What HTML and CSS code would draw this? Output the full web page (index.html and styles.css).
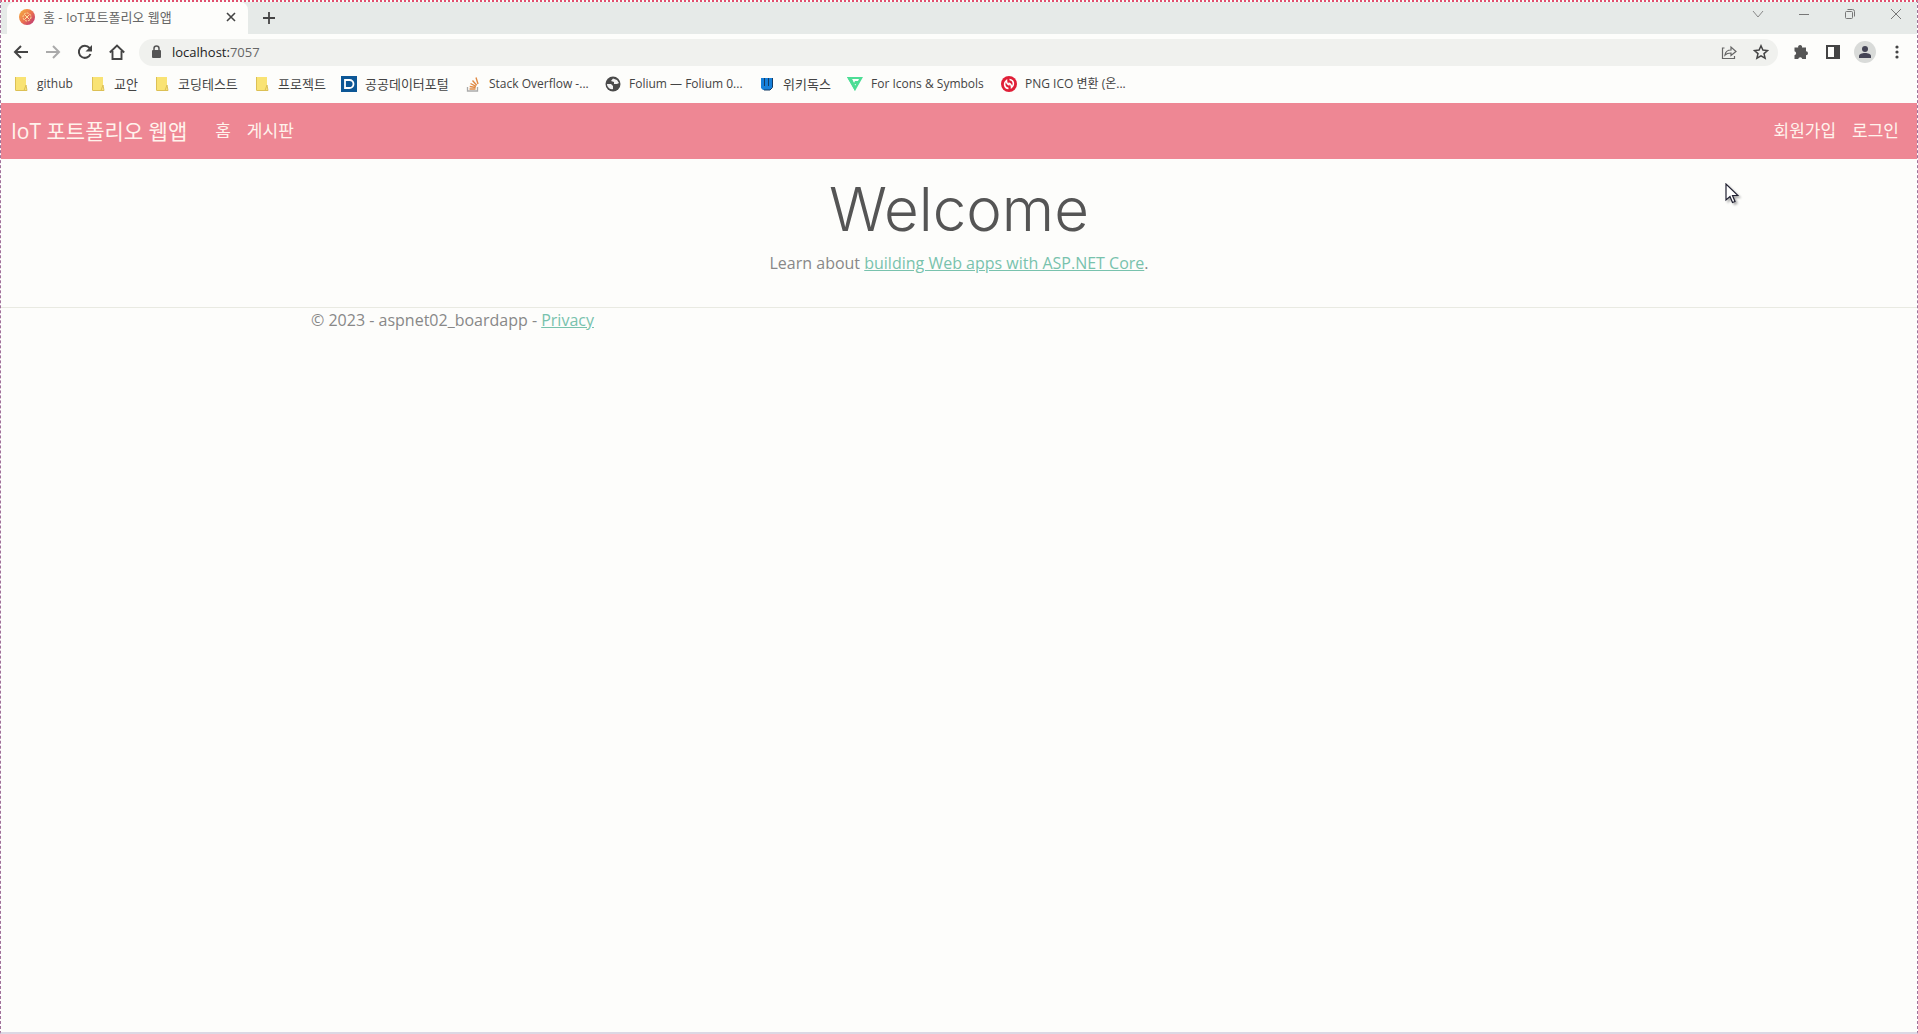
FILE: index.html
```html
<!DOCTYPE html>
<html lang="ko">
<head>
<meta charset="utf-8">
<title>홈 - IoT포트폴리오 웹앱</title>
<link rel="stylesheet" href="styles.css">
</head>
<body>
<div class="window">
  <div class="tabstrip">
    <div class="tab">
      <svg class="i16" viewBox="0 0 16 16"><defs><linearGradient id="fav" x1="0" y1="0" x2="1" y2="1"><stop offset="0" stop-color="#f5b63c"/><stop offset=".5" stop-color="#ec7350"/><stop offset="1" stop-color="#b52d79"/></linearGradient></defs><circle cx="8" cy="8" r="8" fill="url(#fav)"/><circle cx="8" cy="8" r="4" fill="none" stroke="#ffe3a0" stroke-dasharray="2 1"/><path d="M5.500 5.500l5 5M10.500 5.500l-5 5" stroke="#ffe3a0"/></svg>
      <span class="tab-title">홈 - IoT포트폴리오 웹앱</span>
      <button class="icon-btn" aria-label="탭 닫기"><svg class="i16" viewBox="0 0 16 16"><path d="M4 4l8 8M12 4l-8 8" stroke="#444" stroke-width="1.6"/></svg></button>
    </div>
    <button class="icon-btn new-tab" aria-label="새 탭"><svg class="i16" viewBox="0 0 16 16"><path d="M8 2v12M2 8h12" stroke="#444" stroke-width="1.8"/></svg></button>
    <div class="win-controls">
      <button class="icon-btn" aria-label="탭 검색"><svg class="i16" viewBox="0 0 16 16"><path d="M3 5l5 6 5-6" fill="none" stroke="#888"/></svg></button>
      <button class="icon-btn" aria-label="최소화"><svg class="i16" viewBox="0 0 16 16"><path d="M3 8.500h10" stroke="#777"/></svg></button>
      <button class="icon-btn" aria-label="복원"><svg class="i16" viewBox="0 0 16 16"><rect x="3.500" y="5.500" width="7" height="7" rx="1" fill="none" stroke="#777"/><path d="M5.500 3.500h5a2 2 0 0 1 2 2v5" fill="none" stroke="#777"/></svg></button>
      <button class="icon-btn" aria-label="닫기"><svg class="i16" viewBox="0 0 16 16"><path d="M3 3l10 10M13 3L3 13" stroke="#777"/></svg></button>
    </div>
  </div>

  <div class="toolbar">
    <div class="nav-buttons">
      <button class="icon-btn" aria-label="뒤로"><svg class="i16" viewBox="0 0 16 16"><path d="M15 8H2M8 2L2 8l6 6" fill="none" stroke="#444" stroke-width="2"/></svg></button>
      <button class="icon-btn" aria-label="앞으로"><svg class="i16" viewBox="0 0 16 16"><path d="M1 8h13M8 2l6 6-6 6" fill="none" stroke="#aaa" stroke-width="2"/></svg></button>
      <button class="icon-btn" aria-label="새로고침"><svg class="i16" viewBox="0 0 16 16"><path d="M13.500 10A6 6 0 1 1 12.500 4L14 6" fill="none" stroke="#444" stroke-width="2"/><path d="M15 1v6.500H8.500z" fill="#444"/></svg></button>
      <button class="icon-btn" aria-label="홈"><svg class="i16" viewBox="0 0 16 16"><path d="M.8 8.500L8 1.500l7.200 7M3.500 7v8h9V7" fill="none" stroke="#444" stroke-width="1.900"/></svg></button>
    </div>
    <div class="omnibox">
      <svg class="i16" viewBox="0 0 16 16"><rect x="4" y="6" width="9" height="8" rx="1" fill="#555"/><path d="M6 6V4.500a2.500 2.500 0 0 1 5 0V6" fill="none" stroke="#555" stroke-width="1.500"/></svg>
      <div class="url" role="textbox" aria-label="주소">localhost:<span class="port">7057</span></div>
      <div class="page-actions">
        <button class="icon-btn" aria-label="공유"><svg class="i16" viewBox="0 0 16 16"><path d="M3.500 4H1.500v10.500h12V12M4 11c.5-3.500 2.500-5 6-5V3l5 4.500-5 4V9c-3 0-4.500.5-6 2z" fill="none" stroke="#666" stroke-width="1.200"/></svg></button>
        <button class="icon-btn" aria-label="북마크"><svg class="i16" viewBox="0 0 16 16"><path d="M8 1.800l1.900 4.300 4.600.4-3.500 3.100 1.100 4.600L8 11.800l-4.100 2.400L5 9.600 1.500 6.500l4.600-.4z" fill="none" stroke="#444" stroke-width="1.500"/></svg></button>
      </div>
    </div>
    <div class="extras">
      <button class="icon-btn" aria-label="확장 프로그램"><svg class="i16" viewBox="0 0 16 16"><path d="M1.500 3.500h3.700a2 2 0 1 1 3.800 0h4v3.700a2 2 0 1 1 0 4V15H9.300a2.100 2.100 0 0 0-4.100 0H1.500v-3.700a2.100 2.100 0 0 0 0-4.100z" fill="#555"/></svg></button>
      <button class="icon-btn" aria-label="사이드 패널"><svg class="i16" viewBox="0 0 16 16"><path d="M1 1h14v14H1zM3 3v10h6V3z" fill="#444" fill-rule="evenodd"/></svg></button>
      <button class="icon-btn avatar" aria-label="프로필"><svg class="i16" viewBox="0 0 16 16"><circle cx="8" cy="5" r="3" fill="#445"/><path d="M2 14v-2c0-4 12-4 12 0v2z" fill="#445"/></svg></button>
      <button class="icon-btn" aria-label="메뉴"><svg class="i16" viewBox="0 0 16 16"><circle cx="8" cy="3" r="1.600" fill="#444"/><circle cx="8" cy="8" r="1.600" fill="#444"/><circle cx="8" cy="13" r="1.600" fill="#444"/></svg></button>
    </div>
  </div>

  <svg width="0" height="0" class="defs"><symbol id="folder" viewBox="0 0 16 16"><path d="M2 1h11v10l1 4H3l-1-1z" fill="#f9e374"/><path d="M13 9l1 5.500h-3L13 9M2.500 14.500h11M2.500 1v13" fill="none" stroke="#dcc055"/></symbol></svg>
  <nav class="bookmarks" aria-label="북마크바">
    <a href="#"><svg class="i16"><use href="#folder"/></svg><span class="latin">github</span></a>
    <a href="#"><svg class="i16"><use href="#folder"/></svg>교안</a>
    <a href="#"><svg class="i16"><use href="#folder"/></svg>코딩테스트</a>
    <a href="#"><svg class="i16"><use href="#folder"/></svg>프로젝트</a>
    <a href="#"><svg class="i16" viewBox="0 0 16 16"><path d="M0 0h16v16H0z" fill="#0d5796"/><path d="M4 4h4.500a4 4 0 0 1 0 8H4z" fill="none" stroke="#fff" stroke-width="1.800"/></svg>공공데이터포털</a>
    <a href="#"><svg class="i16" viewBox="0 0 16 16"><path d="M2.500 11v4h10v-4" fill="none" stroke="#aaa" stroke-width="1.300"/><path d="M4.500 13h6M4.700 10.500l6 1M5.500 7.500l5.500 2.800M7.500 4.500l4.200 4.700M11 1.500l2 6.500" stroke="#e08a45" stroke-width="1.400"/></svg><span class="latin">Stack Overflow -...</span></a>
    <a href="#"><svg class="i16" viewBox="0 0 16 16"><circle cx="8" cy="8" r="7.500" fill="#4a4a4a"/><path d="M2 8h4l2 2v3c-3 1-6-2-6-5zM8 2.500L6 5l3 1v2h3l2-1-2-3z" fill="#f2f2f2"/></svg><span class="latin">Folium — Folium 0...</span></a>
    <a href="#"><svg class="i16" viewBox="0 0 16 16"><path d="M2 2h11v10l-2 2H4l-2-2z" fill="#1680da"/><path d="M5.500 2v8M9.500 2v8M13.500 2v9.500L11 14H5" fill="none" stroke="#153b63"/></svg>위키독스</a>
    <a href="#"><svg class="i16" viewBox="0 0 16 16"><path d="M0 1h4l4 9 1-2H6.500L8 5h3l1-2H5L4 1h12l-8 14z" fill="#4ddd95"/><path d="M0 1h4l4.500 9L8 15z" fill="#4ddd95"/></svg><span class="latin">For Icons &amp; Symbols</span></a>
    <a href="#"><svg class="i16" viewBox="0 0 16 16"><circle cx="8" cy="8" r="8" fill="#e01f37"/><path d="M7.500 12.500C3 12 2.500 7 5.500 4.500c0 3 1 4 3 4.500M8.500 3.500c4.500.5 5 5.500 2 8 0-3-1-4-3-4.500" fill="none" stroke="#fff" stroke-width="1.500"/></svg><span class="latin">PNG ICO 변환 (온...</span></a>
  </nav>

  <header class="navbar">
    <a class="brand" href="#">IoT 포트폴리오 웹앱</a>
    <a href="#">홈</a>
    <a href="#">게시판</a>
    <div class="account"><a href="#">회원가입</a><a href="#">로그인</a></div>
  </header>

  <main class="welcome">
    <h1>Welcome</h1>
    <p>Learn about <a href="#">building Web apps with ASP.NET Core</a>.</p>
  </main>
  <footer class="footer"><div class="container">© 2023 - aspnet02_boardapp - <a href="#">Privacy</a></div></footer>
  <svg class="cursor" viewBox="0 0 14 22"><path d="M1 1v16l4-3.500 2.500 6 2.500-1-2.500-6H13z" fill="#fff" stroke="#223" stroke-width="1.200"/></svg>
</div>
</body>
</html>
```
FILE: styles.css
```css
* { box-sizing: border-box; }
body {
  margin: 0;
  background: #fdfdfb;
  color: #888;
  font: 16px/24px "Open Sans", "Noto Sans CJK KR", sans-serif;
}
a { color: #78c2ad; }
.window {
  position: relative;
  min-height: 100vh;
  border: 1px dashed #a0709a;
  border-top: 2px dotted #e0506f;
  border-bottom: 2px solid #dcd8e4;
}
.i16 { width: 16px; height: 16px; flex: none; display: block; }
.defs { position: absolute; }
.icon-btn { border: 0; padding: 0; background: none; flex: none; }

.tabstrip {
  display: flex;
  align-items: center;
  height: 32px;
  padding-left: 6px;
  background: #e6eae8;
}
.tab {
  display: flex;
  align-items: center;
  gap: 8px;
  width: 241px;
  height: 32px;
  padding: 0 9px 2px 12px;
  background: #fdfdfb;
  border-radius: 8px 8px 0 0;
  color: #666;
  font-size: 13px;
}
.tab-title { flex: 1; white-space: nowrap; }
.new-tab { margin-left: 13px; }
.win-controls {
  display: flex;
  gap: 30px;
  height: 24px;
  align-items: center;
  align-self: flex-start;
  margin-left: auto;
  padding-right: 13px;
}

.toolbar { display: flex; align-items: center; height: 36px; }
.nav-buttons { display: flex; gap: 16px; padding: 0 14px 0 12px; }
.omnibox {
  display: flex;
  align-items: center;
  flex: 1;
  gap: 8px;
  height: 27px;
  padding: 0 9px;
  border-radius: 14px;
  background: #f0f1ee;
}
.url { flex: 1; color: #222; font-size: 13px; }
.port { color: #666; }
.page-actions { display: flex; gap: 16px; }
.extras { display: flex; align-items: center; gap: 16px; padding: 0 12px 0 15px; }
.avatar {
  display: grid;
  place-items: center;
  width: 22px;
  height: 22px;
  margin: 0 -3px;
  border-radius: 50%;
  background: #d9dbd9;
}

.bookmarks {
  display: grid;
  grid-template-columns: 77px 64px 100px 87px 124px 140px 154px 88px 154px 140px;
  align-items: center;
  height: 33px;
  padding: 0 0 6px 12px;
  font-size: 13px;
}
.bookmarks a {
  display: flex;
  align-items: center;
  gap: 8px;
  color: #444;
  text-decoration: none;
  white-space: nowrap;
}
.latin { font-size: 12px; }

.navbar {
  display: flex;
  align-items: center;
  gap: 16px;
  height: 56px;
  padding: 0 18px 0 10px;
  background: #ee8794;
  font-size: 17px;
}
.navbar a { color: #fff3ec; text-decoration: none; }
.navbar .brand { margin-right: 12px; font-size: 21px; }
.account { display: flex; gap: 16px; margin-left: auto; }

.welcome { padding: 16px 0 32px; text-align: center; }
.welcome h1 {
  margin: 0 0 8px;
  color: #555;
  font: 300 60px/68px Inter, sans-serif;
}
.welcome p { margin: 0; }
.footer { border-top: 1px solid #e9eae2; }
.container { max-width: 1320px; margin: 0 auto; padding: 0 12px; }
.cursor { position: absolute; top: 181px; right: 178px; width: 14px; height: 22px; filter: drop-shadow(2px 2px 1px #aaa); }
```
